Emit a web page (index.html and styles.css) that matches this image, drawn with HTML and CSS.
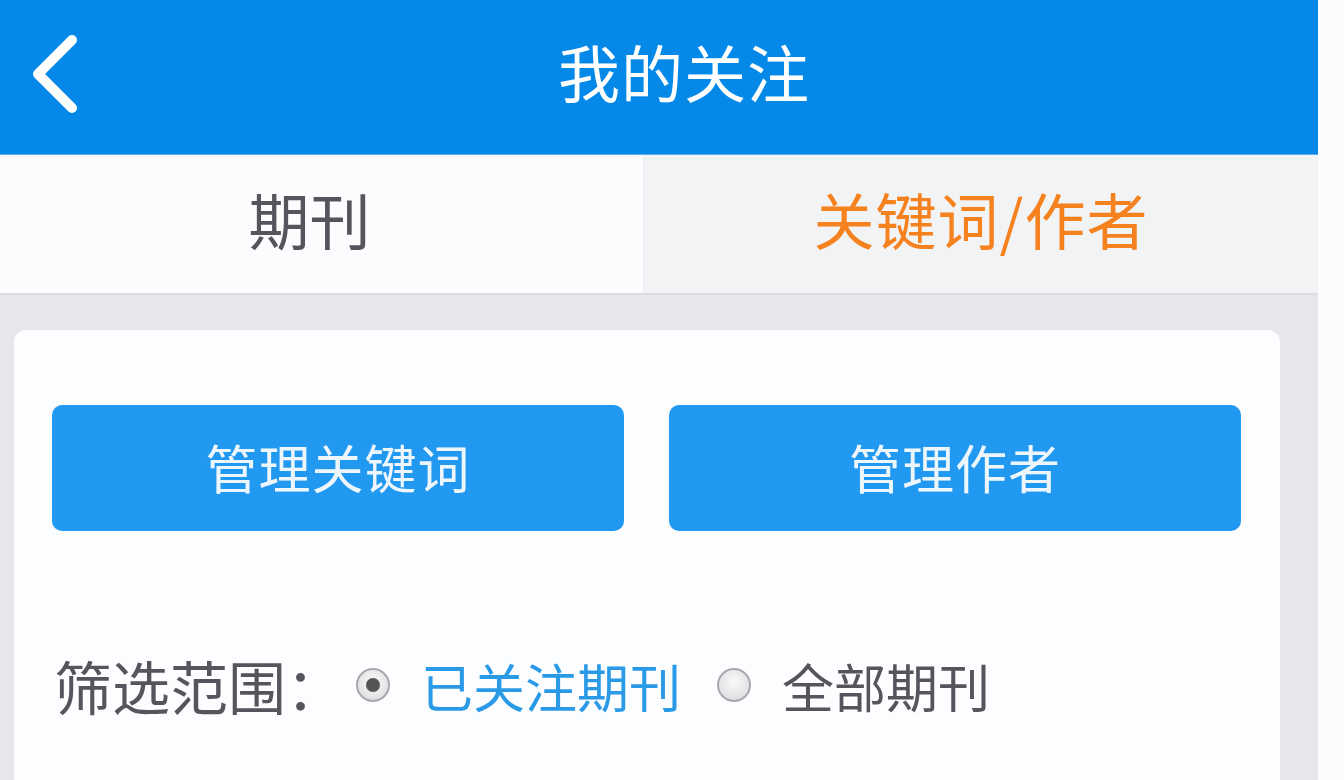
FILE: index.html
```html
<!DOCTYPE html>
<html lang="zh-CN">
<head>
  <meta charset="UTF-8" />
  <title>我的关注</title>
  <link rel="stylesheet" href="styles.css">
</head>
<body>

  <div class="app">
    <header class="top-bar">
      <a class="back" href="#">
        <svg width="60" height="90" viewBox="0 0 60 90">
          <polyline points="42,8 8,42 42,76" fill="none" stroke="#fff" stroke-width="10" stroke-linecap="round" stroke-linejoin="round" />
        </svg>
      </a>
      <h1 class="title">我的关注</h1>
    </header>

    <nav class="tabs">
      <div class="tab tab-left">期刊</div>
      <div class="tab tab-active">关键词/作者</div>
    </nav>

    <div class="main">
      <div class="card">
        <div class="actions">
          <button class="btn">管理关键词</button>
          <button class="btn">管理作者</button>
        </div>

        <div class="filter">
          <span class="filter-label">筛选范围：</span>
          <label class="option option-on">
            <span class="radio checked"></span>
            <span>已关注期刊</span>
          </label>
          <label class="option">
            <span class="radio"></span>
            <span>全部期刊</span>
          </label>
        </div>
      </div>
    </div>
  </div>

</body>
</html>
```

FILE: styles.css
```css
body {
  margin: 0;
  height: 780px;
  overflow: hidden;
  background: #fbfcfe;
  font-family: "Noto Sans CJK SC", "Noto Sans", sans-serif;
}

.app {
  width: 1318px;
  height: 780px;
  background: #e6e7eb;
  display: flex;
  flex-direction: column;
}

.top-bar {
  position: relative;
  height: 155px;
  background: #0489e8;
  border-bottom: 1px solid #5fb0ee;
  box-sizing: border-box;
  display: flex;
  align-items: center;
  justify-content: center;
  padding-left: 50px;
  padding-bottom: 12px;
}

.back {
  position: absolute;
  left: 30px;
  top: 32px;
  display: block;
  width: 60px;
  height: 90px;
}

.title {
  margin: 0;
  color: #fff;
  font-size: 62px;
  font-weight: 400;
  letter-spacing: 1px;
}

.tabs {
  height: 140px;
  display: flex;
  border-bottom: 2px solid #dcdde1;
  box-sizing: border-box;
}

.tab {
  display: flex;
  align-items: center;
  justify-content: center;
  font-size: 61px;
  color: #58545e;
  padding-bottom: 12px;
  box-sizing: border-box;
}

.tab-left {
  width: 644px;
  background: #fcfcfe;
  border-right: 1px solid #ebecef;
  padding-right: 24px;
}

.tab-active {
  flex: 1;
  background: #f2f3f5;
  color: #f5821f;
  letter-spacing: 1px;
}

.main {
  flex: 1;
  padding: 35px 38px 0 14px;
}

.card {
  height: 100%;
  background: #fcfdff;
  border-radius: 12px 12px 0 0;
  padding: 75px 39px 0 38px;
  box-sizing: border-box;
}

.actions {
  display: flex;
  gap: 45px;
}

.btn {
  flex: 1;
  height: 126px;
  border: 0;
  border-radius: 10px;
  background: #2299f0;
  color: #eef6fd;
  font-family: inherit;
  font-size: 52px;
  letter-spacing: 1px;
  padding-bottom: 4px;
}

.filter {
  display: flex;
  align-items: center;
  height: 80px;
  margin-top: 114px;
  margin-left: 2px;
  color: #58545e;
}

.filter-label {
  font-size: 58px;
  margin-right: 12px;
}

.option {
  display: flex;
  align-items: center;
  font-size: 52px;
  margin-right: 36px;
}

.option-on {
  color: #2a9ae6;
}

.radio {
  width: 30px;
  height: 30px;
  border-radius: 50%;
  border: 2px solid #a9a9ad;
  background: radial-gradient(circle at 50% 40%, #fafafa, #d8d8dc);
  margin-right: 31px;
  position: relative;
}

.radio.checked::after {
  content: "";
  position: absolute;
  left: 8px;
  top: 8px;
  width: 14px;
  height: 14px;
  border-radius: 50%;
  background: #555;
}
```
